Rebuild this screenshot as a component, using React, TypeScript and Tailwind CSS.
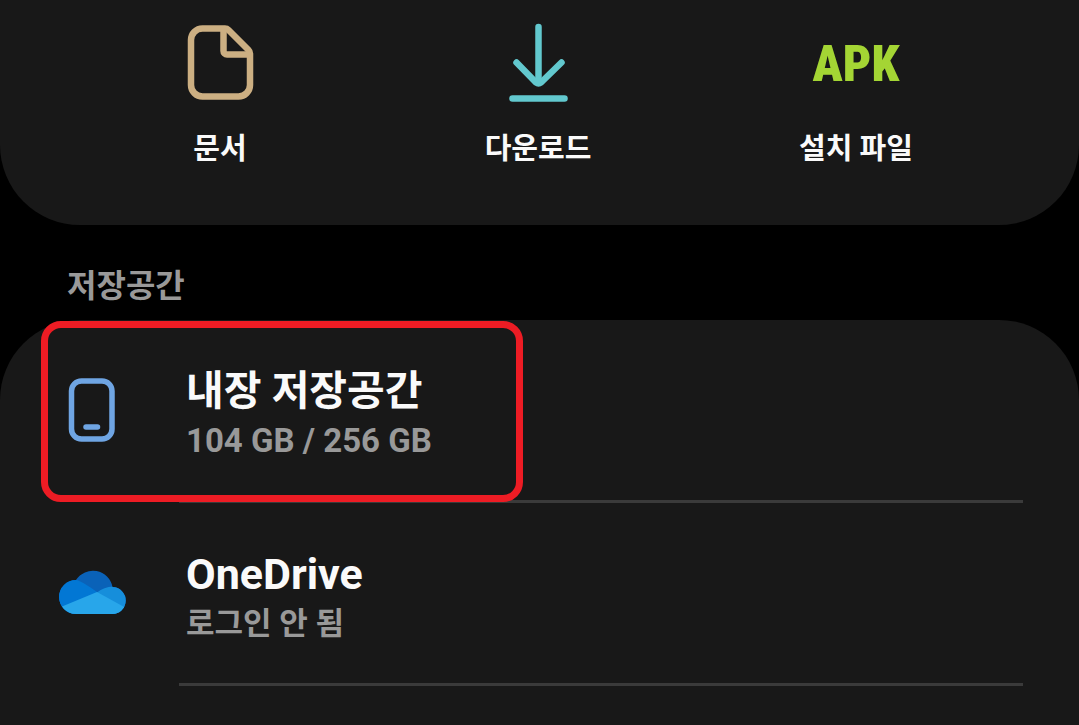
import React from 'react'

type Category = {
  icon: React.ReactNode;
  label: string;
}

type Storage = {
  icon: React.ReactNode;
  name: string;
  nameSize: string;
  status: string;
  statusSize: string;
  highlighted?: boolean;
}

const DocumentIcon = () => (
  <svg width="80" height="80" viewBox="0 0 80 80" fill="none" stroke="#ccaf82" strokeWidth="6.500" strokeLinejoin="round" aria-hidden="true">
    <path d="M22.500 6.500H45Q47 6.500 48.500 8L68.500 28Q70 29.500 70 31.500V63A11.500 11.500 0 0 1 58.500 74.500H22.500A11.500 11.500 0 0 1 11 63V18A11.500 11.500 0 0 1 22.500 6.500Z" />
    <path d="M43.500 7V29A3.500 3.500 0 0 0 47 32.500H69" />
  </svg>
)

const DownloadIcon = () => (
  <svg width="80" height="80" viewBox="0 0 80 80" fill="none" stroke="#62c8ce" strokeWidth="6.500" strokeLinecap="round" strokeLinejoin="round" aria-hidden="true">
    <path d="M40.500 5V60" />
    <path d="M18.500 40.500L38 60.500Q40.500 62.500 43 60.500L63.500 40.500" />
    <path d="M14.500 76.500H66.500" />
  </svg>
)

const ApkIcon = () => (
  <span className="pt-1 font-['Roboto_Condensed','Liberation_Sans_Narrow',sans-serif] text-[50px] leading-none font-black text-[#a4d534]">
    APK
  </span>
)

const PhoneIcon = () => (
  <svg width="72" height="72" viewBox="0 0 72 72" fill="none" stroke="#6fa5e3" strokeWidth="5.500" strokeLinecap="round" aria-hidden="true">
    <rect x="15.500" y="7" width="40.500" height="58" rx="10" />
    <path d="M30 53H41.500" />
  </svg>
)

const OneDriveIcon = () => (
  <svg width="72" height="72" viewBox="0 0 72 72" aria-hidden="true">
    <clipPath id="cloud">
      <path d="M20 57A17 17 0 0 1 20 23A20 20 0 0 1 56.500 30A13.500 13.500 0 0 1 56 57Z" />
    </clipPath>
    <g clipPath="url(#cloud)">
      <rect width="72" height="72" fill="#0a62b8" />
      <path d="M0 15H12L20 23Q25 23.500 41 35L30 60H0Z" fill="#0277d4" />
      <path d="M41 35.500Q48 30 57 29.500L72 28V60H50Z" fill="#168edb" />
      <path d="M0 52L41 35L72 52V72H0Z" fill="#28a6ea" />
    </g>
  </svg>
)

const categories: Category[] = [
  { icon: <DocumentIcon />, label: "문서" },
  { icon: <DownloadIcon />, label: "다운로드" },
  { icon: <ApkIcon />, label: "설치 파일" },
]

// Latin strings are set slightly larger than Hangul ones
const storages: Storage[] = [
  {
    icon: <PhoneIcon />,
    name: "내장 저장공간",
    nameSize: "text-[41px]",
    status: "104 GB / 256 GB",
    statusSize: "text-[33px]",
    highlighted: true
  },
  {
    icon: <OneDriveIcon />,
    name: "OneDrive",
    nameSize: "text-[43px]",
    status: "로그인 안 됨",
    statusSize: "text-[31px]"
  },
]

const App: React.FC = () => {
  return (
    <main className="flex min-h-screen flex-col bg-black font-['Roboto','Noto_Sans_CJK_KR',sans-serif] font-bold text-[#fafafa]">
      <section className="grid grid-cols-3 rounded-b-[80px] bg-[#181818] pt-[22px] pr-16 pb-14 pl-[61px]">
        {categories.map((category) => (
          <button key={category.label} type="button" className="flex cursor-pointer flex-col items-center">
            <span className="flex h-20 items-center">{category.icon}</span>
            <span className="mt-[27px] text-[29px] leading-10">{category.label}</span>
          </button>
        ))}
      </section>

      <h2 className="px-[67px] pt-10 pb-3 text-[32px] leading-[43px] text-[#999999]">저장공간</h2>

      <section className="flex-1 rounded-t-[80px] bg-[#181818]">
        <ul>
          {storages.map((storage) => (
            <li key={storage.name} className="relative">
              <button type="button" className="flex w-full cursor-pointer items-stretch px-14 text-left">
                <span className="flex w-[72px] items-center pb-1">{storage.icon}</span>
                <span className="ml-[51px] flex flex-1 flex-col border-b-3 border-[#3a3a3a] pt-[45px] pb-[35px] pl-[7px]">
                  <span className={`${storage.nameSize} leading-[52px]`}>{storage.name}</span>
                  <span className={`${storage.statusSize} leading-[48px] text-[#999999]`}>{storage.status}</span>
                </span>
              </button>
              {storage.highlighted && (
                <span className="pointer-events-none absolute top-px left-[41px] h-[181px] w-[482px] rounded-[20px] border-7 border-[#ed1c24]" />
              )}
            </li>
          ))}
        </ul>
      </section>
    </main>
  )
}

export default App
